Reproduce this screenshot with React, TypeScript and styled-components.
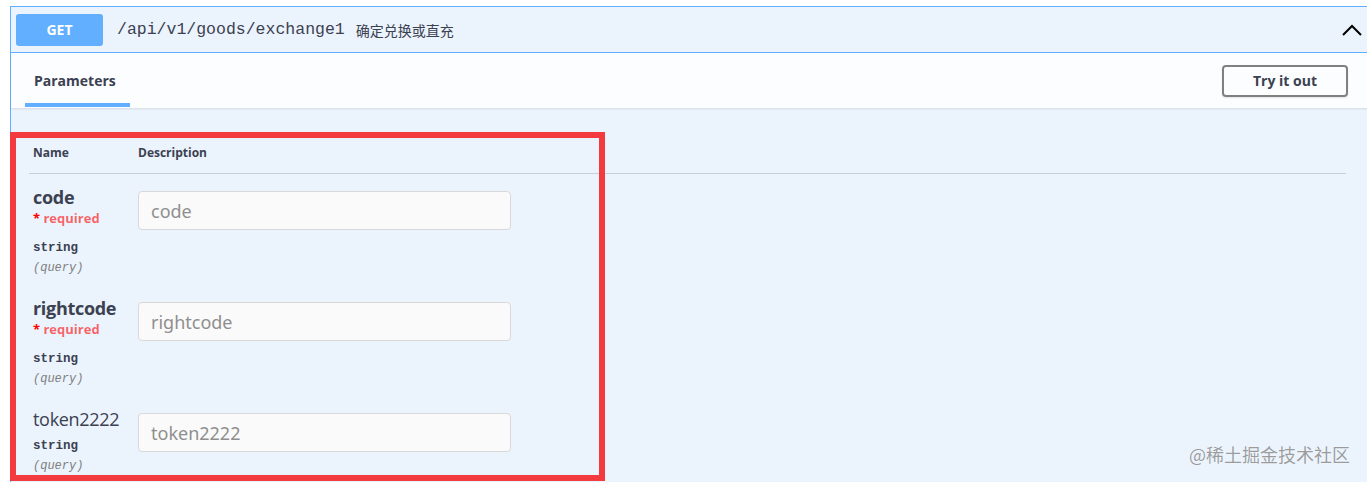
import React from 'react'
import styled, { createGlobalStyle } from 'styled-components'

const GlobalStyle = createGlobalStyle`
  html, body {
    margin: 0;
    padding: 0;
    background: #fff;
    font-family: "Open Sans", "Noto Sans", "Noto Sans CJK SC", sans-serif;
    color: #3b4151;
    overflow: hidden;
  }
`

const Page = styled.div`
  position: relative;
  width: 1367px;
  height: 482px;
  padding: 6px 0 0 10px;
  box-sizing: border-box;
  overflow: hidden;
`

const OpBlock = styled.div`
  margin-right: -10px;
  border: 1px solid #61affe;
  border-bottom: none;
  background: #ebf3fc;
  height: 520px;
`

const Summary = styled.div`
  display: flex;
  align-items: center;
  height: 45px;
  padding: 0 14px 0 5px;
  border-bottom: 1px solid #61affe;
`

const Method = styled.span`
  display: flex;
  align-items: center;
  justify-content: center;
  width: 87px;
  height: 32px;
  border-radius: 3px;
  background: #61affe;
  color: #fff;
  font-weight: 700;
  font-size: 14px;
`

const Path = styled.span`
  margin-left: 14px;
  font-family: "Liberation Mono", "DejaVu Sans Mono", monospace;
  font-size: 16.5px;
  color: #3b4151;
`

const Desc = styled.span`
  margin-left: 11px;
  font-family: "Noto Sans CJK SC", sans-serif;
  font-size: 14px;
  color: #3b4151;
`

const Chevron = styled.svg`
  margin-left: auto;
  width: 20px;
  height: 14px;
`

const TabHeader = styled.div`
  display: flex;
  align-items: center;
  height: 55px;
  padding: 0 28px 0 14px;
  background: rgba(255, 255, 255, 0.8);
  box-shadow: 0 1px 2px rgba(0, 0, 0, 0.1);
`

const Tab = styled.div`
  align-self: stretch;
  display: flex;
  align-items: center;
  width: 105px;
  padding-left: 9px;
  box-sizing: border-box;
  font-size: 14px;
  font-weight: 700;
  color: #3b4151;
  position: relative;
  &::after {
    content: '';
    position: absolute;
    left: 0;
    right: 0;
    bottom: 1px;
    height: 4px;
    background: #61affe;
  }
`

const TryButton = styled.button`
  margin-left: auto;
  width: 126px;
  height: 32px;
  border: 2px solid #808080;
  border-radius: 4px;
  background: transparent;
  font-family: "Open Sans", sans-serif;
  font-size: 14px;
  font-weight: 700;
  color: #3b4151;
  box-shadow: 0 1px 2px rgba(0, 0, 0, 0.1);
`

const Params = styled.div`
  padding: 35px 30px 0 18px;
`

const HeaderRow = styled.div`
  display: flex;
  padding: 0 0 10px 4px;
  border-bottom: 1px solid rgba(59, 65, 81, 0.2);
  font-size: 12px;
  font-weight: 700;
  line-height: 20px;
`

const NameCol = styled.div`
  width: 105px;
  flex: none;
`

const Row = styled.div`
  display: flex;
  padding: 12px 0 7px 4px;
`

const ParamName = styled.div<{ $required?: boolean }>`
  font-size: 18px;
  line-height: 23px;
  font-weight: ${({ $required }) => ($required ? 700 : 400)};
  color: #3b4151;
  letter-spacing: -0.3px;
`

const Required = styled.div`
  font-size: 13px;
  line-height: 18px;
  font-weight: 700;
  color: rgba(255, 0, 0, 0.6);
  span {
    color: #f00;
  }
`

const ParamType = styled.div<{ $gap: number }>`
  margin-top: ${({ $gap }) => $gap}px;
  font-family: "Liberation Mono", "DejaVu Sans Mono", monospace;
  font-size: 12.5px;
  font-weight: 700;
  line-height: 20px;
  color: #3b4151;
`

const ParamIn = styled.div`
  font-family: "Liberation Mono", "DejaVu Sans Mono", monospace;
  font-size: 12px;
  font-style: italic;
  line-height: 20px;
  color: #808080;
`

const Input = styled.input`
  margin-top: 5px;
  width: 373px;
  height: 39px;
  box-sizing: border-box;
  padding: 0 12px;
  border: 1px solid #d9d9d9;
  border-radius: 4px;
  background: #fafafa;
  font-family: "Noto Sans", "Open Sans", sans-serif;
  font-size: 18px;
  color: #3b4151;
  outline: none;
  &::placeholder {
    color: #8f8f8f;
  }
`

const Highlight = styled.div`
  position: absolute;
  left: 10px;
  top: 132px;
  width: 595px;
  height: 349px;
  box-sizing: border-box;
  border: 6px solid #f33a3f;
  pointer-events: none;
`

const Watermark = styled.div`
  position: absolute;
  right: 17px;
  bottom: 15px;
  font-family: "Noto Sans CJK SC", sans-serif;
  font-size: 18px;
  color: rgba(60, 60, 60, 0.5);
  text-shadow: 0 0 1px rgba(255, 255, 255, 0.8);
`

const params = [
  { name: 'code', required: true },
  { name: 'rightcode', required: true },
  { name: 'token2222', required: false },
]

const App = () => {
  return (
    <Page>
      <GlobalStyle />
      <OpBlock>
        <Summary>
          <Method>GET</Method>
          <Path>/api/v1/goods/exchange1</Path>
          <Desc>确定兑换或直充</Desc>
          <Chevron viewBox="0 0 20 14">
            <polyline points="1,12 10,3 19,12" fill="none" stroke="#000" strokeWidth="2" />
          </Chevron>
        </Summary>
        <TabHeader>
          <Tab>Parameters</Tab>
          <TryButton>Try it out</TryButton>
        </TabHeader>
        <Params>
          <HeaderRow>
            <NameCol>Name</NameCol>
            <div>Description</div>
          </HeaderRow>
          {params.map((p) => (
            <Row key={p.name}>
              <NameCol>
                <ParamName $required={p.required}>{p.name}</ParamName>
                {p.required && (
                  <Required>
                    <span>*</span> required
                  </Required>
                )}
                <ParamType $gap={p.required ? 11 : 5}>string</ParamType>
                <ParamIn>(query)</ParamIn>
              </NameCol>
              <Input placeholder={p.name} />
            </Row>
          ))}
        </Params>
      </OpBlock>
      <Highlight />
      <Watermark>@稀土掘金技术社区</Watermark>
    </Page>
  )
}

export default App
